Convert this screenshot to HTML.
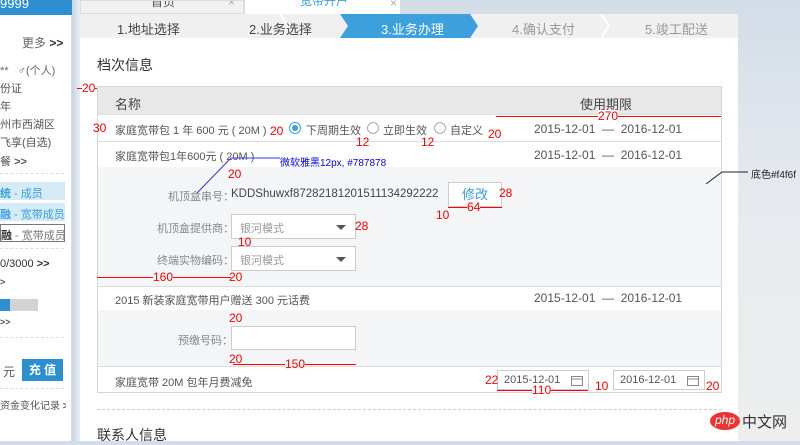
<!DOCTYPE html>
<html><head><meta charset="utf-8"><style>
*{margin:0;padding:0;box-sizing:border-box}
body{width:800px;height:441px;overflow:hidden;position:relative;font-family:"Liberation Sans","Noto Sans CJK SC",sans-serif;font-size:11px;color:#555;background:linear-gradient(#d3dde8,#e6eaee 200px,#eeeeee)}
.a{position:absolute;white-space:nowrap}
.r{position:absolute;color:#f00;font-size:12px;white-space:nowrap;line-height:12px}
.rl{position:absolute;background:#f00}
.g{position:absolute;background:#f3f5f6}
.sel{position:absolute;background:#fff;border:1px solid #ccc;width:125px;height:25px;color:#999;padding:5px 8px}
.sel:after{content:"";position:absolute;right:9px;top:10px;border:5px solid transparent;border-top:5px solid #555}
.date{position:absolute;background:#fff;border:1px solid #ccc;height:20px;width:92px;font-size:11px;padding:3px 6px;color:#555;white-space:nowrap}
.date svg{position:absolute;right:5px;top:4px}
</style></head><body>
<div class="a" style="left:0;top:0;width:72px;height:441px;background:#fff;border-right:1px solid #ddd;overflow:hidden"></div>
<div class="a" style="left:0;top:0;width:72px;height:15px;background:#2d8fd0;color:#fff;font-size:13px;line-height:8px">9999</div>
<div class="a" style="left:72px;top:0;width:8px;height:441px;background:linear-gradient(90deg,#c6d5e4,#e8eef3)"></div>
<div style="position:absolute;left:0;top:0;width:66px;height:441px;overflow:hidden">
<div class="a" style="left:22px;top:34px;font-size:12px;color:#666">更多 <b style="color:#333">&gt;&gt;</b></div>
<div class="a" style="left:0;top:62px;color:#666">** &nbsp;&nbsp;♂(个人)</div>
<div class="a" style="left:0;top:80px">份证</div>
<div class="a" style="left:0;top:98px">年</div>
<div class="a" style="left:0;top:116px">州市西湖区</div>
<div class="a" style="left:0;top:134px">飞享(自选)</div>
<div class="a" style="left:0;top:153px">餐 <b>&gt;&gt;</b></div>
<div class="a" style="left:0;top:173px;width:64px;border-top:1px dashed #ddd"></div>
<div class="a" style="left:0;top:182px;width:65px;height:18px;background:#d6ebf8;color:#3a9de0;padding-top:3px"><b>统</b> - 成员</div>
<div class="a" style="left:0;top:203px;width:65px;height:18px;background:#d6ebf8;color:#3a9de0;padding-top:3px"><b>融</b> - 宽带成员</div>
<div class="a" style="left:0;top:224px;width:65px;height:18px;border:1px solid #777;color:#777;padding-top:2px"><b style="color:#333">融</b> - 宽带成员</div>
<div class="a" style="left:0;top:248px;width:64px;border-top:1px dashed #ddd"></div>
<div class="a" style="left:0;top:258px;color:#333">0/3000 <b>&gt;&gt;</b></div>
<div class="a" style="left:0;top:277px;font-size:9px;font-weight:bold">&gt;</div>
<div class="a" style="left:0;top:299px;width:10px;height:12px;background:#2d8fd0"></div>
<div class="a" style="left:10px;top:299px;width:28px;height:12px;background:#d3d3d3"></div>
<div class="a" style="left:0;top:317px;font-size:9px;font-weight:bold">&gt;&gt;</div>
<div class="a" style="left:0;top:337px;width:64px;border-top:1px dashed #ddd"></div>
<div class="a" style="left:3px;top:363px;font-size:12px">元</div>
<div class="a" style="left:22px;top:359px;width:41px;height:22px;background:#2d8fd0;color:#fff;text-align:center;line-height:22px;font-weight:bold;font-size:12px">充 值</div>
<div class="a" style="left:0;top:388px;width:64px;border-top:1px dashed #ddd"></div>
<div class="a" style="left:0;top:397px;font-size:10px">资金变化记录 <b>&gt;&gt;</b></div>
</div>
<div class="a" style="left:80px;top:0;width:164px;height:14px;background:#f1f1f1;border:1px solid #ddd;color:#555;font-size:12px;line-height:2px;padding-left:70px;overflow:hidden">首页<span style="position:absolute;right:8px;color:#aaa">×</span></div>
<div class="a" style="left:245px;top:0;width:155px;height:15px;background:#fff;color:#3a9de0;font-size:12px;line-height:2px;padding-left:55px;overflow:hidden">宽带开户</div>
<div class="a" style="left:390px;top:-4px;color:#aaa;font-size:12px">×</div>
<div class="a" style="left:80px;top:14px;width:658px;height:427px;background:#fff"></div>
<div class="a" style="left:80px;top:14px;width:658px;height:24px;background:#f0f0f0"></div>
<svg class="a" style="left:80px;top:14px" width="658" height="24"><polygon points="260,0 390,0 398,12 390,24 260,24 268,12" fill="#3ba0dc"/><polyline points="200,0 208,12 200,24" fill="none" stroke="#fff" stroke-width="2"/><polyline points="521,0 529,12 521,24" fill="none" stroke="#fff" stroke-width="2"/></svg>
<div class="a" style="left:117px;top:19px;font-size:13px;color:#444">1.地址选择</div>
<div class="a" style="left:249px;top:19px;font-size:13px;color:#444">2.业务选择</div>
<div class="a" style="left:381px;top:19px;font-size:13px;color:#fff">3.业务办理</div>
<div class="a" style="left:512px;top:19px;font-size:13px;color:#999">4.确认支付</div>
<div class="a" style="left:645px;top:19px;font-size:13px;color:#999">5.竣工配送</div>
<div class="a" style="left:97px;top:55px;font-size:14px;color:#333">档次信息</div>
<div class="a" style="left:97px;top:86px;width:625px;height:307px;border:1px solid #d5d5d5"></div>
<div class="a" style="left:98px;top:87px;width:623px;height:28px;background:#e8e8e8;border-bottom:1px solid #ddd"></div>
<div class="a" style="left:115px;top:94px;font-size:13px;color:#444">名称</div>
<div class="a" style="left:580px;top:94px;font-size:13px;color:#444">使用期限</div>
<div class="a" style="left:115px;top:122px">家庭宽带包 1 年 600 元 ( 20M )</div>
<svg class="a" style="left:289px;top:122px" width="12" height="12"><circle cx="6" cy="6" r="5.5" fill="#fff" stroke="#3ba0dc"/><circle cx="6" cy="6" r="3" fill="#3ba0dc"/></svg>
<div class="a" style="left:306px;top:122px">下周期生效</div>
<svg class="a" style="left:367px;top:122px" width="12" height="12"><circle cx="6" cy="6" r="5.5" fill="#fff" stroke="#aaa"/></svg>
<div class="a" style="left:383px;top:122px">立即生效</div>
<svg class="a" style="left:434px;top:122px" width="12" height="12"><circle cx="6" cy="6" r="5.5" fill="#fff" stroke="#aaa"/></svg>
<div class="a" style="left:450px;top:122px">自定义</div>
<div class="a" style="left:534px;top:122px;font-size:12px">2015-12-01 &nbsp;— &nbsp;2016-12-01</div>
<div class="a" style="left:98px;top:141px;width:623px;border-top:1px solid #ddd"></div>
<div class="a" style="left:115px;top:148px">家庭宽带包1年600元 ( 20M )</div>
<div class="a" style="left:534px;top:148px;font-size:12px">2015-12-01 &nbsp;— &nbsp;2016-12-01</div>
<div class="g" style="left:98px;width:623px;top:167px;height:119px"></div>
<div class="a" style="left:168px;top:188px;color:#888">机顶盒串号：</div>
<div class="a" style="left:231px;top:188px;color:#444;font-size:11.5px">KDDShuwxf87282181201511134292222</div>
<div class="a" style="left:448px;top:182px;width:54px;height:25px;background:#fff;border:1px solid #ccc;color:#3a9de0;font-size:13px;text-align:center;line-height:23px">修改</div>
<div class="sel" style="left:231px;top:214px">银河模式</div>
<div class="a" style="left:157px;top:220px;color:#888">机顶盒提供商：</div>
<div class="sel" style="left:231px;top:246px">银河模式</div>
<div class="a" style="left:157px;top:252px;color:#888">终端实物编码：</div>
<div class="a" style="left:98px;top:286px;width:623px;border-top:1px solid #ddd"></div>
<div class="a" style="left:115px;top:292px">2015 新装家庭宽带用户赠送 300 元话费</div>
<div class="a" style="left:534px;top:291px;font-size:12px">2015-12-01 &nbsp;— &nbsp;2016-12-01</div>
<div class="g" style="left:98px;width:623px;top:310px;height:56px"></div>
<div class="a" style="left:231px;top:326px;width:125px;height:24px;background:#fff;border:1px solid #ccc"></div>
<div class="a" style="left:178px;top:332px;color:#888">预缴号码：</div>
<div class="a" style="left:98px;top:366px;width:623px;border-top:1px solid #ddd"></div>
<div class="a" style="left:115px;top:374px">家庭宽带 20M 包年月费减免</div>
<div class="date" style="left:497px;top:370px">2015-12-01<svg width="12" height="11"><rect x="0.5" y="1.5" width="11" height="9" fill="none" stroke="#888"/><line x1="0" y1="4" x2="12" y2="4" stroke="#888"/></svg></div>
<div class="date" style="left:613px;top:370px">2016-12-01<svg width="12" height="11"><rect x="0.5" y="1.5" width="11" height="9" fill="none" stroke="#888"/><line x1="0" y1="4" x2="12" y2="4" stroke="#888"/></svg></div>
<div class="a" style="left:97px;top:409px;width:625px;border-top:1px dashed #ccc"></div>
<div class="a" style="left:97px;top:425px;font-size:14px;color:#333">联系人信息</div>
<div class="rl" style="left:77px;top:88px;width:20px;height:1px"></div>
<div class="r" style="left:82px;top:82px;background:#fff">20</div>
<div class="r" style="left:93px;top:122px">30</div>
<div class="r" style="left:270px;top:125px">20</div>
<div class="r" style="left:356px;top:136px">12</div>
<div class="r" style="left:421px;top:136px">12</div>
<div class="r" style="left:488px;top:128px">20</div>
<div class="rl" style="left:496px;top:116px;width:225px;height:1px"></div>
<div class="r" style="left:598px;top:110px;background:#fff">270</div>
<div class="a" style="left:280px;top:154px;color:#00f;font-size:10px">微软雅黑12px, #787878</div>
<svg class="a" style="left:195px;top:157px" width="90" height="40"><polyline points="85,1 36,1 2,36" fill="none" stroke="#33f"/></svg>
<div class="r" style="left:228px;top:168px">20</div>
<div class="r" style="left:499px;top:187px">28</div>
<div class="r" style="left:436px;top:209px">10</div>
<div class="rl" style="left:448px;top:207px;width:54px;height:1px"></div>
<div class="r" style="left:467px;top:201px;background:#f3f5f6">64</div>
<div class="r" style="left:355px;top:220px">28</div>
<div class="r" style="left:238px;top:236px">10</div>
<div class="rl" style="left:97px;top:277px;width:134px;height:1px"></div>
<div class="r" style="left:153px;top:271px;background:#f3f5f6">160</div>
<div class="r" style="left:229px;top:271px">20</div>
<div class="r" style="left:229px;top:312px">20</div>
<div class="r" style="left:229px;top:353px">20</div>
<div class="rl" style="left:233px;top:364px;width:123px;height:1px"></div>
<div class="r" style="left:285px;top:358px;background:#f3f5f6">150</div>
<div class="r" style="left:485px;top:374px">22</div>
<div class="rl" style="left:497px;top:390px;width:91px;height:1px"></div>
<div class="r" style="left:532px;top:384px;background:#fff">110</div>
<div class="r" style="left:595px;top:380px">10</div>
<div class="r" style="left:706px;top:380px">20</div>
<svg class="a" style="left:700px;top:170px" width="50" height="16"><polyline points="48,2 22,2 6,14" fill="none" stroke="#222"/></svg>
<div class="a" style="left:751px;top:166px;font-size:10px;color:#222">底色#f4f6f</div>
<div class="a" style="left:710px;top:412px;width:30px;height:18px;border-radius:50%;background:#e33;color:#fff;font-size:12px;text-align:center;line-height:17px;font-style:italic">php</div>
<div class="a" style="left:742px;top:411px;font-size:15px;color:#333">中文网</div>
</body></html>
